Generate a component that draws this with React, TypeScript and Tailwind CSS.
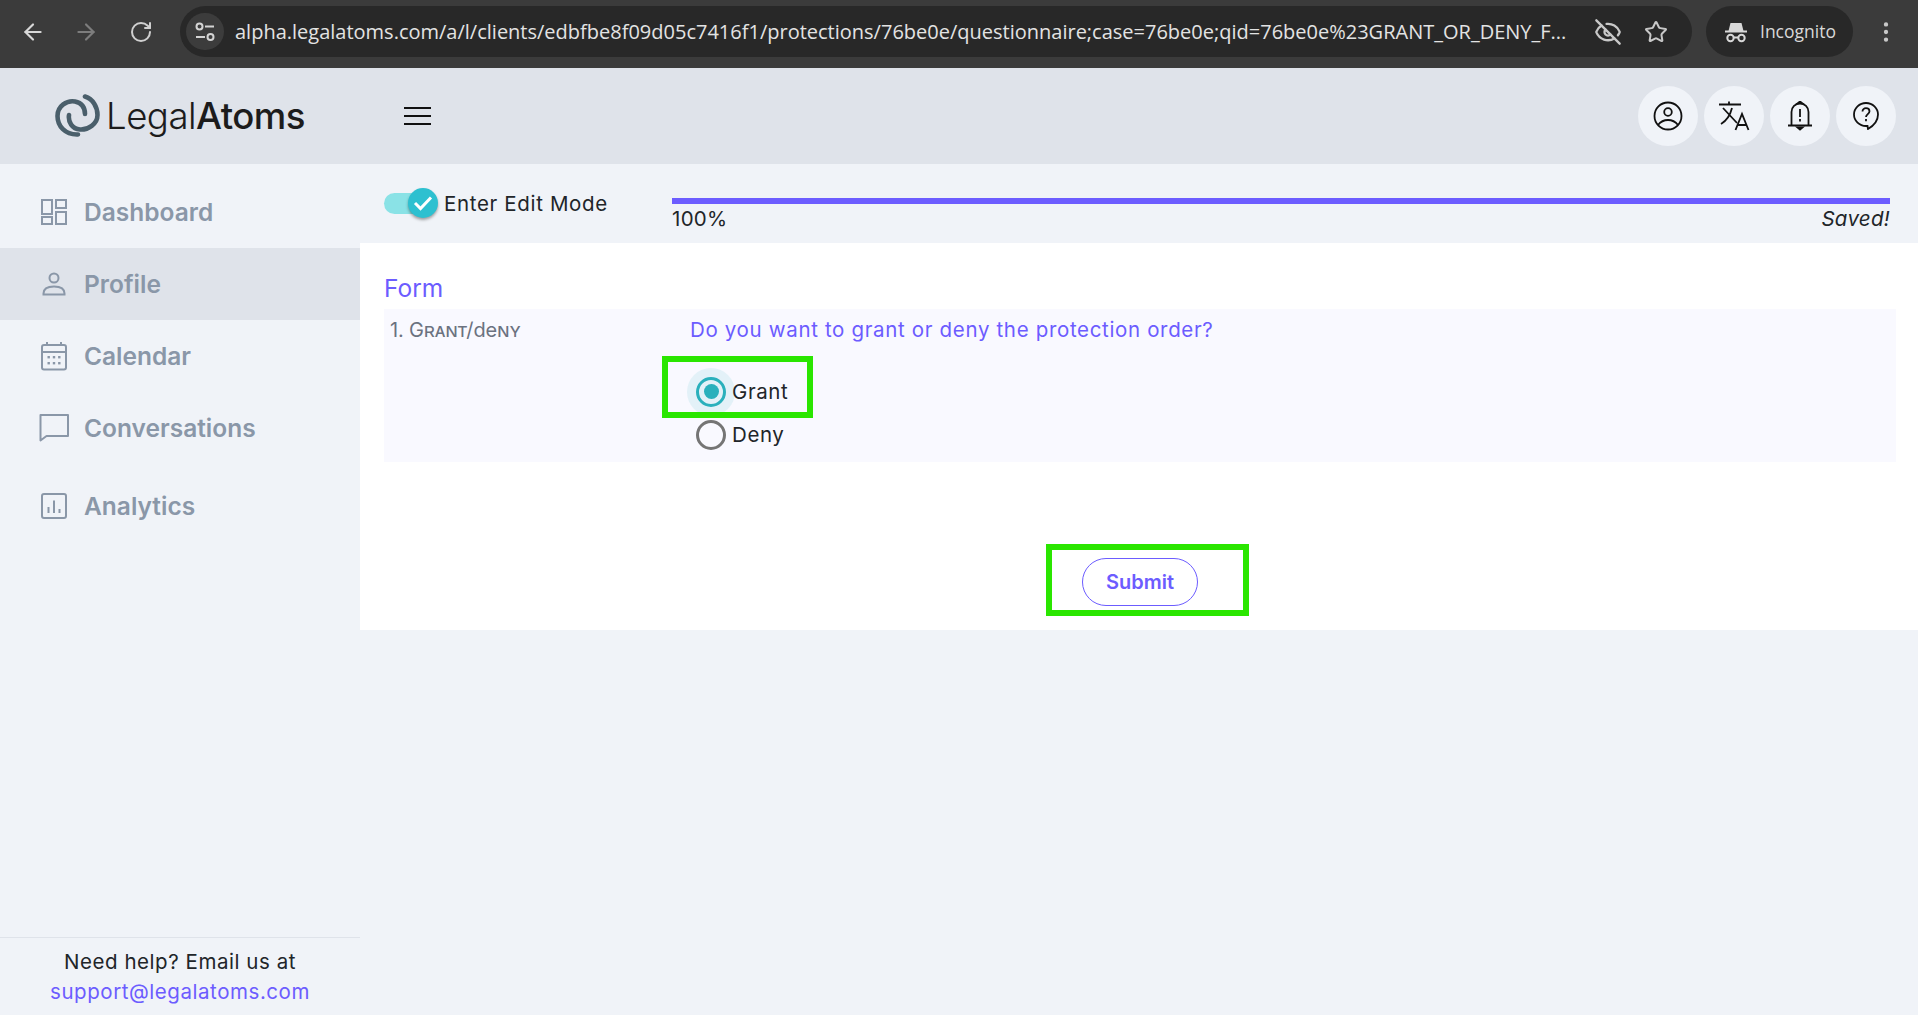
import { ArrowLeft, ArrowRight, RotateCw, EyeOff, Star, EllipsisVertical } from "lucide-react";

function TuneIcon() {
  return (
    <svg width="22" height="22" viewBox="0 0 22 22" fill="none" stroke="#d4d4d4" strokeWidth="2">
      <circle cx="5.5" cy="5.5" r="3" />
      <path d="M11 5.5h9M2 16h9" />
      <circle cx="16.5" cy="16" r="3" />
    </svg>
  );
}

function IncognitoIcon() {
  return (
    <svg width="24" height="24" viewBox="0 0 24 24" fill="none" stroke="#d8d8d8" strokeWidth="2">
      <path d="M1 11.5h22" />
      <path d="M4.5 11 6.5 3h11l2 8z" fill="#d8d8d8" stroke="none" />
      <circle cx="6.5" cy="18" r="3.2" />
      <circle cx="17.5" cy="18" r="3.2" />
      <path d="M9.7 17.5h4.6" />
    </svg>
  );
}

function LogoMark() {
  return (
    <svg width="45" height="43" viewBox="0 0 45 43" fill="none" stroke="#4a5f6b" strokeWidth="4.6" strokeLinecap="round">
      <path d="M23 40.500C10 41 2.500 32 2.500 22 2.500 12 12 6 20 7.500 27 9 30 14 30 20" />
      <path d="M30 2.500C38 5 42.500 13 42.500 21 42.500 30 33 36 25 35.500 17 35 13 28 14 21" />
    </svg>
  );
}

function DashboardIcon() {
  return (
    <svg width="26" height="26" viewBox="0 0 26 26" fill="none" stroke="#8a97a8" strokeWidth="2">
      <rect x="1" y="1" width="10" height="14" />
      <rect x="15" y="1" width="10" height="8" />
      <rect x="1" y="18" width="10" height="7" />
      <rect x="15" y="13" width="10" height="12" />
    </svg>
  );
}

function ProfileIcon() {
  return (
    <svg width="26" height="26" viewBox="0 0 26 26" fill="none" stroke="#8a97a8" strokeWidth="2">
      <circle cx="13" cy="7" r="4.500" />
      <path d="M2.500 22.500c0-5 4.500-7 10.500-7s10.500 2 10.500 7v1h-21z" />
    </svg>
  );
}

function CalendarIcon() {
  return (
    <svg width="26" height="30" viewBox="0 0 26 30" fill="none" stroke="#8a97a8" strokeWidth="2">
      <rect x="1" y="4" width="24" height="24.500" rx="2" />
      <path d="M1 11h24M6 1v4M20 1v4" />
      <g fill="#8a97a8" stroke="none">
        <rect x="6.500" y="15" width="2.400" height="2.400" />
        <rect x="11.800" y="15" width="2.400" height="2.400" />
        <rect x="17.100" y="15" width="2.400" height="2.400" />
        <rect x="6.500" y="21" width="2.400" height="2.400" />
        <rect x="11.800" y="21" width="2.400" height="2.400" />
        <rect x="17.100" y="21" width="2.400" height="2.400" />
      </g>
    </svg>
  );
}

function ChatIcon() {
  return (
    <svg width="30" height="28" viewBox="0 0 30 28" fill="none" stroke="#8a97a8" strokeWidth="2">
      <path d="M1.500 1h27.500v21H7.500L1.500 26.500z" strokeLinejoin="round" />
    </svg>
  );
}

function AnalyticsIcon() {
  return (
    <svg width="26" height="26" viewBox="0 0 26 26" fill="none" stroke="#8a97a8" strokeWidth="2">
      <rect x="1" y="1" width="24" height="24" rx="2" />
      <path d="M7.500 14v6M13 7.500V20M18.500 16v4" />
    </svg>
  );
}

function UserCircleIcon() {
  return (
    <svg width="30" height="30" viewBox="0 0 30 30" fill="none" stroke="#111" strokeWidth="1.800">
      <circle cx="15" cy="15" r="13.500" />
      <circle cx="15" cy="11" r="3.800" />
      <path d="M5 24c2.500-3.200 6-5 10-5s7.500 1.800 10 5" />
    </svg>
  );
}

function TranslateIcon() {
  return (
    <svg width="32" height="30" viewBox="0 0 32 30" fill="none" stroke="#111" strokeWidth="1.800">
      <path d="M1 3.500h22M11 .5v3M5 7l14 15M3 23c5-3 9-8 11-16" />
      <path d="M17.500 29 24 13l6.500 16M19.800 24h8.500" />
    </svg>
  );
}

function BellAlertIcon() {
  return (
    <svg width="24" height="30" viewBox="0 0 24 30" fill="none" stroke="#111" strokeWidth="1.800">
      <path d="M0 24.500h24M3.500 24V11c0-4.800 3.800-8.500 8.500-8.500s8.500 3.700 8.500 8.500v13" />
      <path d="M12 8v8M12 18v2.500" />
      <path d="M10 2h4L12 .5zM9.500 26.500h5L12 28.500z" fill="#111" />
    </svg>
  );
}

function HelpChatIcon() {
  return (
    <svg width="26" height="28" viewBox="0 0 26 28" fill="none" stroke="#111" strokeWidth="1.800">
      <path d="M13 1C6.400 1 1 6.200 1 12.500S6.400 24 13 24h1.500L15 27c6-3.500 10-8.500 10-14.500C25 6.200 19.600 1 13 1z" />
      <path d="M9.500 9.500c0-2 1.500-3.300 3.500-3.300s3.500 1.300 3.500 3.100c0 2.700-3.500 2.900-3.500 5.700M13 17v2.200" />
    </svg>
  );
}

const navItems = [
  { label: "Dashboard", icon: <DashboardIcon />, className: "h-[72px]" },
  { label: "Profile", icon: <ProfileIcon />, className: "h-[72px] bg-[#dfe3ea]" },
  { label: "Calendar", icon: <CalendarIcon />, className: "h-[72px]" },
  { label: "Conversations", icon: <ChatIcon />, className: "h-[72px]" },
  { label: "Analytics", icon: <AnalyticsIcon />, className: "h-[72px] mt-1.5" },
];

const headerButtons = [<UserCircleIcon />, <TranslateIcon />, <BellAlertIcon />, <HelpChatIcon />];

export default function App() {
  return (
    <div className="flex h-[1015px] flex-col overflow-hidden bg-[#f0f3f8] font-['Inter',sans-serif] text-[#212529]">
      {/* browser chrome */}
      <div className="flex h-[68px] shrink-0 items-center bg-[#3b3b3b] pb-[5px] pl-5 pr-4">
        <ArrowLeft size={26} color="#d8d8d8" />
        <ArrowRight size={26} color="#7d7d7d" className="ml-[27px]" />
        <RotateCw size={24} color="#d0d0d0" className="ml-[30px]" />
        <div className="ml-[27px] flex h-[51px] w-[1512px] items-center rounded-full bg-[#282828] pl-1.5 pr-6">
          <div className="flex h-[37px] w-[38px] flex-none items-center justify-center rounded-full bg-[#3c3c3c]">
            <TuneIcon />
          </div>
          <span className="ml-[11px] w-[1340px] flex-none truncate font-['Open_Sans',sans-serif] text-[20px] text-[#e3e3e3]">
            alpha.legalatoms.com/a/l/clients/edbfbe8f09d05c7416f1/protections/76be0e/questionnaire;case=76be0e;qid=76be0e%23GRANT_OR_DENY_F...
          </span>
          <EyeOff size={28} color="#c8c8c8" className="ml-auto" />
          <Star size={24} color="#c8c8c8" className="ml-[22px]" />
        </div>
        <div className="ml-[14px] flex h-[51px] w-[147px] items-center rounded-full bg-[#282828] pl-[18px] text-[#d8d8d8]">
          <IncognitoIcon />
          <span className="ml-3 font-['Open_Sans',sans-serif] text-[17.5px]">Incognito</span>
        </div>
        <EllipsisVertical size={26} color="#c8c8c8" className="ml-[20px]" />
      </div>

      {/* app header */}
      <header className="flex h-[96px] shrink-0 items-center bg-[#dfe3ea] pr-[22px]">
        <div className="flex w-[360px] items-center pl-[55px]">
          <LogoMark />
          <span className="ml-[6px] text-[36.6px] font-light tracking-[-0.5px] text-[#1c1c1c]">
            Legal<span className="font-medium">Atoms</span>
          </span>
        </div>
        <div className="ml-11 flex w-[27px] flex-col gap-[6px]">
          <div className="h-[2px] bg-[#111]" />
          <div className="h-[2px] bg-[#111]" />
          <div className="h-[2px] bg-[#111]" />
        </div>
        <div className="ml-auto flex gap-1.5">
          {headerButtons.map((icon, i) => (
            <button key={i} className="flex h-[60px] w-[60px] items-center justify-center rounded-full bg-[#f0f3f8]">
              {icon}
            </button>
          ))}
        </div>
      </header>

      <div className="flex min-h-0 flex-1">
        {/* sidebar */}
        <aside className="flex w-[360px] shrink-0 flex-col justify-between pt-3">
          <nav>
            {navItems.map((item) => (
              <div key={item.label} className={`flex items-center ${item.className}`}>
                <div className="flex w-[84px] shrink-0 justify-center pl-6">{item.icon}</div>
                <span className="text-[24.5px] font-semibold text-[#8a97a8]">{item.label}</span>
              </div>
            ))}
          </nav>
          <div className="h-[78px] border-t border-[#dfe3ea] pt-[9px] text-center text-[20.5px] leading-[30px] tracking-[0.55px]">
            <div>Need help? Email us at</div>
            <a className="text-[#6c5cff]">support@legalatoms.com</a>
          </div>
        </aside>

        {/* main */}
        <main className="min-w-0 flex-1">
          <div className="flex h-[79px] pl-6 pr-7">
            <div className="flex h-[78px] w-[288px] shrink-0 items-center">
              <div className="relative h-[21px] w-[44px] rounded-full bg-[#8ae2e6]">
                <div className="absolute left-6 -top-[5px] flex h-[30px] w-[30px] items-center justify-center rounded-full bg-[#2dc0d0] shadow-[0_2px_3px_rgba(0,0,0,0.35)]">
                  <svg width="20" height="16" viewBox="0 0 20 16" fill="none" stroke="#fff" strokeWidth="3">
                    <path d="m2 8 5.500 5.500L18 2.500" />
                  </svg>
                </div>
              </div>
              <span className="ml-4 pt-0.5 text-[20.5px] tracking-[0.66px]">Enter Edit Mode</span>
            </div>
            <div className="flex-1 pt-[34px]">
              <div className="h-[6px] bg-[#6c5cff]" />
              <div className="flex justify-between text-[20.5px] leading-[30px] tracking-[0.3px]">
                <span>100%</span>
                <span className="italic">Saved!</span>
              </div>
            </div>
          </div>

          <div className="h-[387px] bg-white pl-6 pr-[22px] pt-6">
            <h2 className="text-[24.5px] leading-[42px] text-[#6c5cff]">Form</h2>
            <div className="flex h-[153px] bg-[#f9f9ff]">
              <div className="w-[306px] shrink-0 pl-1.5 pt-1.5 text-[20px] tracking-[-0.15px] text-[#6b7280] [font-variant:small-caps]">1. Grant/deny</div>
              <div className="pt-1.5">
                <div className="text-[20.5px] tracking-[0.66px] text-[#6c5cff]">Do you want to grant or deny the protection order?</div>
                <div className="mt-[31px] flex flex-col gap-[13px] pl-1.5">
                  <label className="flex h-[30px] items-center">
                    <span className="relative flex h-[30px] w-[30px] items-center justify-center rounded-full border-[3px] border-[#2bb0bd]">
                      <span className="absolute -inset-[12px] rounded-full bg-[#2bb0bd]/10" />
                      <span className="h-[15px] w-[15px] rounded-full bg-[#2bb0bd]" />
                    </span>
                    <span className="relative ml-1.5 pt-0.5 text-[20.5px] tracking-[0.6px]">Grant</span>
                  </label>
                  <label className="flex h-[30px] items-center">
                    <span className="h-[30px] w-[30px] rounded-full border-[3px] border-[#757575]" />
                    <span className="ml-1.5 pt-0.5 text-[20.5px] tracking-[0.6px]">Deny</span>
                  </label>
                </div>
              </div>
            </div>
            <div className="mt-[96px] flex justify-center">
              <button className="h-[48px] w-[116px] rounded-full border border-[#6c5cff] text-[20px] font-semibold text-[#6c5cff]">
                Submit
              </button>
            </div>
          </div>
        </main>
      </div>

      {/* annotation boxes */}
      <div className="pointer-events-none absolute left-[662px] top-[356px] h-[62px] w-[151px] border-[6px] border-[#2ae600]" />
      <div className="pointer-events-none absolute left-[1046px] top-[544px] h-[72px] w-[203px] border-[6px] border-[#2ae600]" />
    </div>
  );
}
